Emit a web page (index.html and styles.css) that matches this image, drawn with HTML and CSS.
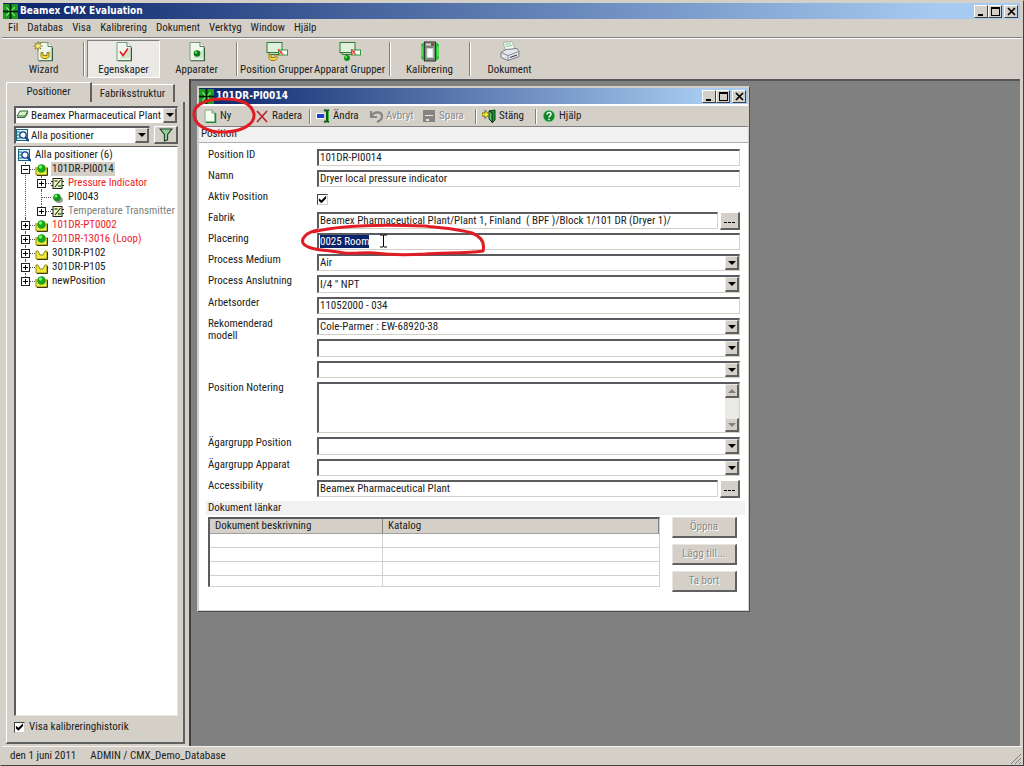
FILE: index.html
```html
<!DOCTYPE html>
<html lang="sv">
<head>
  <meta charset="UTF-8">
  <meta name="viewport" content="width=device-width, initial-scale=1">
  <title>Beamex CMX Evaluation</title>
  <link rel="stylesheet" href="styles.css">
</head>
<body>

  <!-- shared icons -->
  <svg class="defs" aria-hidden="true">
    <symbol id="logo" viewBox="0 0 14 14">
      <rect width="14" height="14" fill="#0a3a10"/>
      <path d="M0 0h6v6H0zM8 0h6v6H8zM0 8h6v6H0zM8 8h6v6H8z" fill="#1c9a24"/>
      <path d="M3 3l3 3M11 3L8 6M3 11l3-3M11 11L8 8" stroke="#6cf05c" stroke-width="1.200"/>
      <path d="M7 0v14M0 7h14" stroke="#052008" stroke-width="1"/>
    </symbol>
    <symbol id="page" viewBox="0 0 16 20">
      <path d="M1 1h10l4 4v14H1z" fill="#eef8ec" stroke="#7d9a7f"/>
      <path d="M3 17h11V8z" fill="#cfe6cd"/>
      <path d="M11 1v4h4" fill="#fff" stroke="#5d7d5f"/>
      <path d="M15.500 6v13.500H2" fill="none" stroke="#2f5a35"/>
    </symbol>
    <symbol id="bowl" viewBox="0 0 10 8">
      <path d="M1 1h2v3h4V1h2v4L7 7H3L1 5z" fill="#f5dc3a" stroke="#94700c" stroke-width=".9"/>
    </symbol>
    <symbol id="group" viewBox="0 0 22 20">
      <rect x="1" y="1" width="15" height="10" fill="#dff0dc" stroke="#2f7a38"/>
      <path d="M3 11v2h9" fill="none" stroke="#2f7a38"/>
      <rect x="12.500" y="8.500" width="9" height="5" fill="#fff" stroke="#2b9a38"/>
      <path d="M12 8l5 5M16 9l-3 4" stroke="#e8432c" stroke-width="1.200"/>
    </symbol>
    <symbol id="search" viewBox="0 0 13 13">
      <rect x=".5" y=".5" width="11" height="11" fill="#d9f0f6" stroke="#16637c"/>
      <path d="M1 3h3M1 6h2M1 9h3" stroke="#16637c"/>
      <circle cx="7" cy="6" r="3.200" fill="#fff" stroke="#0b3f8a" stroke-width="1.300"/>
      <path d="M9 8l4 4" stroke="#0b3f8a" stroke-width="2"/>
    </symbol>
    <symbol id="ball" viewBox="0 0 13 13">
      <path d="M1 4v8h11V4" fill="#f3ea3e" stroke="#8f8a12"/>
      <path d="M12.500 5v7.500H2" stroke="#3a3a08" fill="none"/>
      <circle cx="6.500" cy="5.500" r="4.300" fill="#16a51c"/>
      <circle cx="5.500" cy="4" r="1.700" fill="#7cf070"/>
    </symbol>
    <symbol id="pos" viewBox="0 0 13 13">
      <path d="M1 4h2l2 4h3l2-4h2v8H1z" fill="#f3ea3e" stroke="#8f8a12"/>
      <path d="M12.500 5v7.500H2" stroke="#3a3a08" fill="none"/>
    </symbol>
    <symbol id="dot" viewBox="0 0 13 13">
      <ellipse cx="8" cy="9" rx="4" ry="3" fill="#9a9a9a"/>
      <circle cx="6" cy="6.500" r="3.800" fill="#12931a"/>
      <circle cx="5" cy="5" r="1.500" fill="#7cf070"/>
    </symbol>
    <symbol id="func" viewBox="0 0 13 13">
      <rect x="2" y="1.500" width="9" height="10" fill="#f4f7c4" stroke="#222"/>
      <path d="M0 4.500h2M0 8.500h2M11 4.500h2M11 8.500h2M4 10l5.500-7" stroke="#222" stroke-width="1.100"/>
      <path d="M3.500 4h3M7 9h3" stroke="#267a2a" stroke-width="1.400"/>
    </symbol>
    <symbol id="min" viewBox="0 0 11 9"><path d="M2 7h5v2H2z"/></symbol>
    <symbol id="max" viewBox="0 0 11 9"><path d="M1 0h9v9H1zM2 2v6h7V2z" fill-rule="evenodd"/></symbol>
    <symbol id="close" viewBox="0 0 11 9"><path d="M2 1l7 7M9 1L2 8" stroke="#000" stroke-width="1.700"/></symbol>
  </svg>

  <header class="titlebar">
    <svg class="logo"><use href="#logo"/></svg>
    <h1>Beamex CMX Evaluation</h1>
    <div class="winbtns">
      <button aria-label="Minimera"><svg><use href="#min"/></svg></button>
      <button aria-label="Maximera"><svg><use href="#max"/></svg></button>
      <button class="close" aria-label="Stäng"><svg><use href="#close"/></svg></button>
    </div>
  </header>

  <nav class="menubar">
    <button>Fil</button>
    <button>Databas</button>
    <button>Visa</button>
    <button>Kalibrering</button>
    <button>Dokument</button>
    <button>Verktyg</button>
    <button>Window</button>
    <button>Hjälp</button>
  </nav>

  <div class="toolbar">
    <button>
      <svg viewBox="0 0 22 20"><use href="#page" x="4" width="16" height="20"/><use href="#bowl" x="7" y="10" width="10" height="8"/><path d="M5 0v9M.5 4.500h9M2 1.500l6 6M8 1.500l-6 6" stroke="#8a7a10" stroke-width="1.100"/><circle cx="5" cy="4.500" r="2" fill="#fff27a"/></svg>
      Wizard
    </button>
    <span class="sep"></span>
    <button class="active">
      <svg viewBox="0 0 22 20"><use href="#page" x="3" width="16" height="20"/><path d="M7 10l3 4 5-7" fill="none" stroke="#e02428" stroke-width="1.800"/></svg>
      Egenskaper
    </button>
    <button>
      <svg viewBox="0 0 22 20"><use href="#page" x="3" width="16" height="20"/><circle cx="11" cy="12" r="3.300" fill="#0c7a18"/><circle cx="10" cy="11" r="1.200" fill="#5ee05a"/></svg>
      Apparater
    </button>
    <span class="sep"></span>
    <button>
      <svg viewBox="0 0 22 20"><use href="#group" width="22" height="20"/><use href="#bowl" x="2" y="12" width="10" height="8"/></svg>
      Position Grupper
    </button>
    <button>
      <svg viewBox="0 0 22 20"><use href="#group" width="22" height="20"/><circle cx="8" cy="16.500" r="3" fill="#12931a"/><circle cx="7" cy="15.500" r="1" fill="#7cf070"/></svg>
      Apparat Grupper
    </button>
    <span class="sep"></span>
    <button>
      <svg viewBox="0 0 22 20"><rect x="2" y="1" width="18" height="18" rx="4" fill="#22c02e"/><path d="M3 5v10M19 5v10" stroke="#8af58a"/><rect x="5.500" y=".5" width="11" height="19" fill="#7c8780" stroke="#2b3a30"/><path d="M7 3h8" stroke="#e0d0c8" stroke-width="2"/><path d="M12 3h3" stroke="#8c2020" stroke-width="2"/><rect x="8" y="7" width="6" height="9" fill="#fff" stroke="#c8d0cc"/></svg>
      Kalibrering
    </button>
    <span class="sep"></span>
    <button>
      <svg viewBox="0 0 22 20"><path d="M4 1l9-1 3 8-9 2z" fill="#f4faf4" stroke="#9aa89c" stroke-width=".8"/><path d="M6 3l6-1M7 5l6-1" stroke="#8ac890"/><path d="M2 11l5-3 11-1 2 3v5l-11 4-7-3z" fill="#e4e6ea" stroke="#6e7278" stroke-width=".9"/><path d="M2 11l7 3 11-4M9 14v5" fill="none" stroke="#7b8088" stroke-width=".9"/><path d="M11 16l7-2.500" stroke="#444" stroke-width="1.200"/></svg>
      Dokument
    </button>
  </div>

  <main class="main">
    <aside class="sidebar">
      <div class="tabs" role="tablist">
        <button class="tab selected" role="tab" aria-selected="true">Positioner</button>
        <button class="tab" role="tab" aria-selected="false">Fabriksstruktur</button>
      </div>
      <div class="panel">
        <div class="combo side">
          <svg class="ico" viewBox="0 0 13 13"><path d="M1 7l3-5h8L9 7z" fill="#d8f4c8" stroke="#2c6a30"/><path d="M1 8.500h8l3-5" fill="none" stroke="#2c6a30"/></svg>
          <select aria-label="Fabrik"><option>Beamex Pharmaceutical Plant</option></select>
          <span class="arrow"></span>
        </div>
        <div class="filter-row">
          <div class="combo side">
            <svg class="ico"><use href="#search"/></svg>
            <select aria-label="Filter"><option>Alla positioner</option></select>
            <span class="arrow"></span>
          </div>
          <button class="filter" aria-label="Filtrera"><svg viewBox="0 0 13 13"><path d="M1 1h11L8 6v5l-3 1V6z" fill="#8fce96" stroke="#1c3c20"/></svg></button>
        </div>

        <div class="tree">
          <div class="node root"><svg class="ico"><use href="#search"/></svg><span>Alla positioner (6)</span></div>
          <ul>
            <li>
              <div class="node"><i class="exp open"></i><i class="conn"></i><svg class="ico"><use href="#ball"/></svg><span class="current">101DR-PI0014</span></div>
              <ul>
                <li><div class="node"><i class="exp"></i><i class="conn"></i><svg class="ico"><use href="#func"/></svg><span class="red">Pressure Indicator</span></div></li>
                <li><div class="node"><i class="conn leaf"></i><svg class="ico"><use href="#dot"/></svg><span>PI0043</span></div></li>
                <li><div class="node"><i class="exp"></i><i class="conn"></i><svg class="ico"><use href="#func"/></svg><span class="gray">Temperature Transmitter</span></div></li>
              </ul>
            </li>
            <li><div class="node"><i class="exp"></i><i class="conn"></i><svg class="ico"><use href="#ball"/></svg><span class="red">101DR-PT0002</span></div></li>
            <li><div class="node"><i class="exp"></i><i class="conn"></i><svg class="ico"><use href="#ball"/></svg><span class="red">201DR-13016 (Loop)</span></div></li>
            <li><div class="node"><i class="exp"></i><i class="conn"></i><svg class="ico"><use href="#pos"/></svg><span>301DR-P102</span></div></li>
            <li><div class="node"><i class="exp"></i><i class="conn"></i><svg class="ico"><use href="#pos"/></svg><span>301DR-P105</span></div></li>
            <li><div class="node"><i class="exp"></i><i class="conn"></i><svg class="ico"><use href="#ball"/></svg><span>newPosition</span></div></li>
          </ul>
        </div>

        <label class="history"><input type="checkbox" checked> Visa kalibreringhistorik</label>
      </div>
    </aside>

    <div class="workspace">
      <section class="child">
        <div class="titlebar">
          <svg class="logo"><use href="#logo"/></svg>
          <h2>101DR-PI0014</h2>
          <div class="winbtns">
            <button aria-label="Minimera"><svg><use href="#min"/></svg></button>
            <button aria-label="Maximera"><svg><use href="#max"/></svg></button>
            <button class="close" aria-label="Stäng"><svg><use href="#close"/></svg></button>
          </div>
        </div>

        <div class="actions">
          <button class="new"><svg viewBox="0 0 14 14"><path d="M2 1h7l3 3v9H2z" fill="#f4fff2" stroke="#8aa890"/><path d="M12.500 4v9.500H3" fill="none" stroke="#1b8a35" stroke-width="1.500"/><path d="M9 1v3h3" fill="none" stroke="#7a9a80"/></svg>Ny</button>
          <button class="delete"><svg viewBox="0 0 14 14"><path d="M2 2l10 11M12 2L2 13" stroke="#b8262c" stroke-width="1.700"/></svg>Radera</button>
          <span class="sep"></span>
          <button class="edit"><svg viewBox="0 0 14 14"><rect x="0" y="4" width="8" height="6" fill="#fff"/><rect x="1" y="5" width="7" height="4" fill="#1c3fd0"/><path d="M8 1l3 1 2-1M8 13l3-1 2 1M11 2v10" fill="none" stroke="#0d5a16" stroke-width="2"/><path d="M12.500 3v8" stroke="#37c33c"/></svg>Ändra</button>
          <button class="undo" disabled><svg viewBox="0 0 14 14"><path d="M2 2v6h6M2 8c2-5 10-7 11-1 0 3-2 5-5 6" fill="none" stroke="#868480" stroke-width="2.200"/></svg>Avbryt</button>
          <button class="save" disabled><svg viewBox="0 0 14 14"><path d="M1 1h12v12H1z" fill="#868480"/><path d="M3 6h8v1H3zM4 10h3v2H4z" fill="#e8e6e2"/></svg>Spara</button>
          <span class="sep"></span>
          <button class="exit"><svg viewBox="0 0 14 14"><path d="M7 2l6-1v10l-3 3V3z" fill="#1e9a34" stroke="#0c3c14"/><path d="M7 2v8l3 3V4z" fill="#5bcf62" stroke="#0c3c14"/><path d="M0 4h3V1l4 4.500-4 4V7H0z" fill="#f6ee2c" stroke="#55500a" stroke-width=".8"/></svg>Stäng</button>
          <span class="sep"></span>
          <button class="help"><svg viewBox="0 0 14 14"><circle cx="7" cy="7" r="6.500" fill="#9fd8a0"/><circle cx="7" cy="7" r="5.500" fill="#12852a"/><path d="M5 5.500c0-3 4.500-2.500 4 0C8.800 7 7 6.800 7 8.500M7 9.800v1.400" fill="none" stroke="#fff" stroke-width="1.500"/></svg>Hjälp</button>
        </div>

        <h3 class="section">Position</h3>

        <form class="form">
          <div class="row"><label for="pid">Position ID</label><input class="text" id="pid" type="text" value="101DR-PI0014"></div>
          <div class="row"><label for="namn">Namn</label><input class="text" id="namn" type="text" value="Dryer local pressure indicator"></div>
          <div class="row"><label for="aktiv">Aktiv Position</label><input id="aktiv" type="checkbox" checked></div>
          <div class="row"><label for="fabrik">Fabrik</label><input class="text" id="fabrik" type="text" value="Beamex Pharmaceutical Plant/Plant 1, Finland&nbsp; ( BPF )/Block 1/101 DR (Dryer 1)/"><button type="button" class="browse" aria-label="Bläddra fabrik"><i></i></button></div>
          <div class="row">
            <label for="placering">Placering</label>
            <div class="text editable" id="placering" role="textbox" contenteditable="true" aria-label="Placering"><mark>0025 Room</mark></div>
          </div>
          <div class="row"><label for="medium">Process Medium</label><div class="combo"><select id="medium"><option>Air</option></select><span class="arrow"></span></div></div>
          <div class="row tall"><label for="ansl">Process Anslutning</label><div class="combo"><select id="ansl"><option>I/4 " NPT</option></select><span class="arrow"></span></div></div>
          <div class="row"><label for="order">Arbetsorder</label><input class="text" id="order" type="text" value="11052000 - 034"></div>
          <div class="row"><label class="wrap" for="modell">Rekomenderad modell</label><div class="combo"><select id="modell"><option>Cole-Parmer : EW-68920-38</option></select><span class="arrow"></span></div></div>
          <div class="row tall nolabel"><div class="combo"><select aria-label="Rekomenderad modell 2"><option></option></select><span class="arrow"></span></div></div>
          <div class="row nolabel"><div class="combo"><select aria-label="Rekomenderad modell 3"><option></option></select><span class="arrow"></span></div></div>
          <div class="row notes"><label for="not">Position Notering</label><div class="combo"><textarea id="not"></textarea><div class="scroll"><span class="arrow up"></span><span class="arrow"></span></div></div></div>
          <div class="row tall"><label for="agpos">Ägargrupp Position</label><div class="combo"><select id="agpos"><option></option></select><span class="arrow"></span></div></div>
          <div class="row"><label for="agapp">Ägargrupp Apparat</label><div class="combo"><select id="agapp"><option></option></select><span class="arrow"></span></div></div>
          <div class="row"><label for="acc">Accessibility</label><input class="text" id="acc" type="text" value="Beamex Pharmaceutical Plant"><button type="button" class="browse" aria-label="Bläddra accessibility"><i></i></button></div>
        </form>

        <h3 class="section links">Dokument länkar</h3>
        <div class="docs">
          <table>
            <thead><tr><th>Dokument beskrivning</th><th>Katalog</th></tr></thead>
            <tbody>
              <tr><td></td><td></td></tr>
              <tr><td></td><td></td></tr>
              <tr><td></td><td></td></tr>
              <tr><td></td><td></td></tr>
            </tbody>
          </table>
          <div class="doc-buttons">
            <button disabled>Öppna</button>
            <button disabled>Lägg till...</button>
            <button disabled>Ta bort</button>
          </div>
        </div>

        <!-- red pen marks and mouse pointer -->
        <svg class="marks" viewBox="197 86 553 526" aria-hidden="true">
          <path d="M224 99C207 98 193 105 194 115C195 127 211 133 226 132C243 131 255 124 254 114C252 104 241 98 219 99" />
          <path d="M318 230C307 232 301 238 303 243C307 250 325 250 338 252C350 255 361 252 374 253C390 255 410 255 425 254C440 252 465 254 483 251C485 243 482 237 472 233C455 228 440 228 425 226C400 225 365 225 345 227C333 228 325 229 313 232" />
          <g class="ibeam"><path d="M380 235h3M384 235h3M383.500 235v12M380 247h3M384 247h3"/></g>
        </svg>
      </section>
    </div>
  </main>

  <footer class="statusbar">
    <span>den 1 juni 2011</span>
    <span>ADMIN / CMX_Demo_Database</span>
    <svg class="grip" viewBox="0 0 10 10"><path d="M0 10L10 0M4 10l6-6M8 10l2-2" stroke="#808080"/></svg>
  </footer>

</body>
</html>
```

FILE: styles.css
```css
* {
  box-sizing: border-box;
}

html, body {
  height: 100%;
}

body {
  margin: 0;
  padding: 1px;
  display: flex;
  flex-direction: column;
  background: #d4d0c8;
  border: 1px solid #d4d0c8;
  border-right-color: #404040;
  border-bottom-color: #404040;
  color: #1c1c1c;
  font-family: "Roboto Condensed", Roboto, "Liberation Sans", sans-serif;
  font-size: 11px;
  line-height: 14px;
  overflow: hidden;
}

button, input, select, textarea {
  font: inherit;
  color: inherit;
  margin: 0;
  padding: 0;
  border: none;
  background: none;
  border-radius: 0;
  appearance: none;
  outline: none;
}

h1, h2, h3 {
  margin: 0;
  font-size: 11px;
}

.defs {
  display: none;
}

/* title bars */
.titlebar {
  display: flex;
  align-items: center;
  height: 16px;
  margin: 1px 2px 0 1px;
  padding-right: 2px;
  background: linear-gradient(to right, #0a246a, #a6caf0 92%);
  color: #fff;
}

.titlebar h1, .titlebar h2 {
  flex: 1;
  margin-left: 2px;
  font-family: "DejaVu Sans Condensed", "DejaVu Sans", sans-serif;
  font-size: 10px;
  font-weight: bold;
  line-height: 14px;
}

.logo {
  width: 15px;
  height: 15px;
}

.winbtns {
  display: flex;
}

.winbtns button {
  display: flex;
  align-items: center;
  justify-content: center;
  width: 14px;
  height: 13px;
  background: #d4d0c8;
  border: 1px solid #fff;
  border-right-color: #404040;
  border-bottom-color: #404040;
}

.winbtns .close {
  margin-left: 2px;
}

.winbtns svg {
  width: 11px;
  height: 9px;
}

/* menu */
.menubar {
  display: flex;
  gap: 9px;
  height: 19px;
  padding: 1px 6px;
  border-bottom: 1px solid #808080;
}

/* main toolbar */
.toolbar {
  display: flex;
  align-items: center;
  height: 41px;
  padding: 1px 5px;
  border-top: 1px solid #fff;
}

.toolbar button {
  display: flex;
  flex-direction: column;
  align-items: center;
  justify-content: space-between;
  width: 73px;
  height: 38px;
  padding: 1px 0;
  white-space: nowrap;
}

.toolbar svg {
  width: 22px;
  height: 21px;
}

.toolbar .active {
  background: #ebe9e5;
  border: 1px solid #808080;
  border-right-color: #fff;
  border-bottom-color: #fff;
  padding: 0;
}

.sep {
  flex: none;
  width: 2px;
  height: 34px;
  margin: 0 2px 0 3px;
  border-left: 1px solid #808080;
  border-right: 1px solid #fff;
}

.main {
  flex: 1;
  display: flex;
  min-height: 0;
}

/* sidebar */
.sidebar {
  flex: none;
  width: 187px;
  padding: 3px 4px 2px 4px;
  display: flex;
  flex-direction: column;
}

.tabs {
  display: flex;
  align-items: flex-end;
  height: 20px;
}

.tab {
  width: 83px;
  height: 18px;
  border-top: 1px solid #fff;
  border-right: 2px solid #606060;
}

.tab.selected {
  width: 86px;
  height: 20px;
  padding-bottom: 2px;
  border-left: 1px solid #fff;
}

.panel {
  flex: 1;
  display: flex;
  flex-direction: column;
  min-height: 0;
  padding: 4px 5px 8px 7px;
  border-left: 1px solid #fff;
  border-right: 2px solid #606060;
  border-bottom: 2px solid #606060;
}

.combo {
  flex: 1;
  display: flex;
  min-width: 0;
  background: #fff;
  border: 1px solid #d4d0c8;
  border-top: 2px solid #5c5c60;
  border-left: 2px solid #5c5c60;
}

.combo select {
  flex: 1;
  min-width: 0;
  padding-left: 1px;
}

.combo.side {
  flex: none;
  height: 18px;
  align-items: center;
}

.ico {
  flex: none;
  width: 13px;
  height: 13px;
}

.side select {
  padding-left: 2px;
}

.arrow {
  flex: none;
  display: flex;
  align-items: center;
  justify-content: center;
  width: 14px;
  height: 100%;
  background: #d4d0c8;
  border: 1px solid #ece9e4;
  border-right: 2px solid #606060;
  border-bottom: 2px solid #606060;
}

.arrow::before {
  content: "";
  border: 4px solid transparent;
  border-top-color: #000;
  border-bottom: none;
}

.filter-row {
  display: flex;
  gap: 4px;
  margin: 2px 0;
}

.filter-row .combo {
  flex: 1;
}

.filter {
  display: flex;
  align-items: center;
  justify-content: center;
  width: 24px;
  height: 18px;
  border: 1px solid #fff;
  border-right: 2px solid #606060;
  border-bottom: 2px solid #606060;
}

.filter svg {
  width: 14px;
  height: 14px;
}

.tree {
  flex: 1;
  min-height: 0;
  padding: 1px 2px;
  background: #fff;
  border: 1px solid #e8e6e2;
  border-top: 1px solid #5c5c60;
  border-left: 2px solid #5c5c60;
}

.tree ul {
  list-style: none;
  margin: 0 0 0 3px;
  padding: 0;
}

.tree ul ul {
  margin-left: 16px;
}

.tree li {
  position: relative;
}

.tree li::before {
  content: "";
  position: absolute;
  left: 4px;
  top: 0;
  bottom: 0;
  border-left: 1px dotted #555;
}

.tree li:last-child::before {
  bottom: auto;
  height: 7px;
}

.node {
  display: flex;
  align-items: center;
  height: 14px;
  white-space: nowrap;
}

.node span {
  margin-left: 3px;
  padding: 0 1px;
}

.exp {
  flex: none;
  position: relative;
  width: 9px;
  height: 9px;
  border: 1px solid #222;
  background:
    linear-gradient(#000, #000) center / 5px 1px no-repeat,
    linear-gradient(#000, #000) center / 1px 5px no-repeat,
    #fff;
}

.exp.open {
  background: linear-gradient(#000, #000) center / 5px 1px no-repeat, #fff;
}

.conn {
  flex: none;
  width: 5px;
  border-top: 1px dotted #555;
}

.conn.leaf {
  width: 10px;
  margin-left: 4px;
}

.current {
  background: #d4d0c8;
}

.red {
  color: #f01c24;
}

.gray {
  color: #808080;
}

.history {
  display: flex;
  align-items: center;
  gap: 4px;
  margin-top: 4px;
}

input[type="checkbox"] {
  flex: none;
  width: 11px;
  height: 11px;
  background: #fff;
  border: 1px solid #d4d0c8;
  border-top-color: #404040;
  border-left-color: #404040;
}

input[type="checkbox"]:checked::before {
  content: "";
  display: block;
  width: 9px;
  height: 9px;
  background: #000;
  clip-path: polygon(10% 35%, 38% 58%, 90% 8%, 90% 40%, 38% 92%, 10% 68%);
}

/* workspace and child window */
.workspace {
  flex: 1;
  position: relative;
  margin-right: 2px;
  background: #808080;
  border-top: 2px solid #55555a;
  border-left: 2px solid #404040;
}

.child {
  position: absolute;
  left: 6px;
  top: 5px;
  width: 553px;
  background: #fff;
  border: 2px solid #d4d0c8;
  border-right-color: #505050;
  border-bottom-color: #505050;
  outline: 1px solid #d4d0c8;
  outline-offset: -2px;
}

.child .titlebar {
  margin: 0;
}

.actions {
  display: flex;
  align-items: center;
  height: 22px;
  margin-top: 1px;
  padding-left: 4px;
  background: #d4d0c8;
  border-bottom: 1px solid #808080;
  border-top: 1px solid #fff;
}

.actions button {
  display: flex;
  align-items: center;
  gap: 3px;
}

.actions svg {
  width: 14px;
  height: 14px;
}

.actions .sep {
  height: 15px;
  margin: 0 5px;
}

.actions .new {
  width: 52px;
}

.actions .delete {
  width: 49px;
}

.actions .edit {
  width: 53px;
}

.actions .undo {
  width: 53px;
}

.actions .save {
  width: 48px;
}

.actions .exit {
  width: 48px;
}

.actions button:disabled, .doc-buttons button:disabled {
  color: #8c8a86;
  text-shadow: 1px 1px #fff;
}

.section {
  height: 16px;
  padding-left: 2px;
  background: #f1f1f1;
  border-bottom: 1px solid #b0b0b0;
  font-weight: normal;
}

.form {
  display: flex;
  flex-direction: column;
  gap: 4px;
  padding: 6px 8px 4px 9px;
}

.row {
  display: flex;
  height: 17px;
}

.row label {
  flex: none;
  width: 109px;
  line-height: 12px;
  height: 24px;
}

.row label.wrap {
  padding-right: 30px;
}

.row.tall {
  height: 18px;
}

.row.nolabel {
  padding-left: 109px;
}

.row.notes {
  height: 51px;
}

.row input[type="checkbox"] {
  margin-top: 3px;
}

.text {
  flex: 1;
  min-width: 0;
  padding: 0 1px;
  background: #fff;
  border: 1px solid #d4d0c8;
  border-top: 2px solid #5c5c60;
  border-left: 2px solid #5c5c60;
}

.editable {
  outline: none;
  white-space: nowrap;
}

mark {
  background: #0a246a;
  color: #fff;
}

.browse {
  width: 20px;
  height: 18px;
  margin-left: 2px;
  background: #d4d0c8;
  border: 1px solid #fff;
  border-right: 2px solid #606060;
  border-bottom: 2px solid #606060;
}

.browse i {
  display: block;
  width: 11px;
  margin: 4px auto 0;
  height: 1px;
  background: repeating-linear-gradient(to right, #000 0 3px, transparent 3px 4px);
}

textarea {
  flex: 1;
  resize: none;
}

.scroll {
  display: flex;
  flex-direction: column;
  justify-content: space-between;
  background: #ebe9e5;
}

.scroll .arrow {
  height: 14px;
}

.scroll .arrow::before {
  border-top-color: #808080;
}

.scroll .up::before {
  border: 4px solid transparent;
  border-top: none;
  border-bottom-color: #808080;
}

.links {
  height: 14px;
  margin: 0 3px 0 7px;
  border: none;
}

.docs {
  display: flex;
  gap: 12px;
  padding: 2px 11px 18px 9px;
}

table {
  flex: 1;
  align-self: flex-start;
  table-layout: fixed;
  border-collapse: separate;
  border-spacing: 0;
  border: 1px solid #d4d0c8;
  border-top: 2px solid #5c5c60;
  border-left: 2px solid #5c5c60;
}

th {
  height: 15px;
  padding: 0 5px;
  background: #d4d0c8;
  border-right: 1px solid #808080;
  border-bottom: 1px solid #a0a0a0;
  font-weight: normal;
  line-height: 14px;
  text-align: left;
}

th:first-child {
  width: 173px;
}

td {
  height: 14px;
  padding: 0;
  border-bottom: 1px solid #d0d0d0;
}

td:first-child {
  border-right: 1px solid #d0d0d0;
}

tbody tr:last-child td {
  height: 10px;
  border-bottom: none;
}

.doc-buttons {
  display: flex;
  flex-direction: column;
  gap: 6px;
}

.doc-buttons button {
  width: 65px;
  height: 21px;
  background: #d4d0c8;
  border: 1px solid #e8e6e2;
  border-right: 2px solid #606060;
  border-bottom: 2px solid #606060;
}

.marks {
  position: absolute;
  left: -2px;
  top: -2px;
  width: 553px;
  height: 526px;
  overflow: visible;
  pointer-events: none;
  fill: none;
  stroke: #e01c24;
  stroke-width: 3;
}

.ibeam {
  stroke: #000;
  stroke-width: 1;
}

.statusbar {
  display: flex;
  align-items: center;
  gap: 14px;
  height: 18px;
  padding: 1px 1px 0 8px;
  border-top: 1px solid #f4f2ee;
}

.grip {
  width: 10px;
  height: 10px;
  margin: 6px 0 0 auto;
}
```
